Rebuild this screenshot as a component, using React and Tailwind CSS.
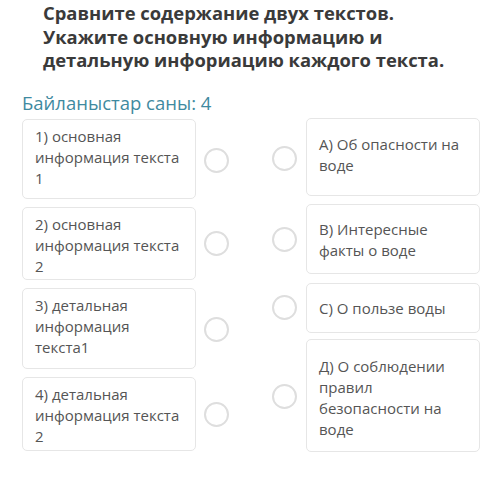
import React from 'react';

const leftItems = [
  { lines: ['1) основная', 'информация текста', '1'], h: 'h-[80px]', circle: 'mt-[29px]' },
  { lines: ['2) основная', 'информация текста', '2'], h: 'h-[73px]', circle: 'mt-[24px]' },
  { lines: ['3) детальная', 'информация', 'текста1'], h: 'h-[81px]', circle: 'mt-[29px]' },
  { lines: ['4) детальная', 'информация текста', '2'], h: 'h-[74px]', circle: 'mt-[25px]' },
];

const rightItems = [
  { lines: ['А) Об опасности на', 'воде'], h: 'h-[78px]', pt: 'pt-[15px]', circle: 'mt-[28px]', mt: 'mt-0' },
  { lines: ['В) Интересные', 'факты о воде'], h: 'h-[70px]', pt: 'pt-[14px]', circle: 'mt-[23px]', mt: 'mt-[8px]' },
  { lines: ['С) О пользе воды'], h: 'h-[50px]', pt: 'pt-[14px]', circle: 'mt-[12px]', mt: 'mt-[9px]' },
  { lines: ['Д) О соблюдении', 'правил', 'безопасности на', 'воде'], h: 'h-[113px]', pt: 'pt-[16px]', circle: 'mt-[45px]', mt: 'mt-[6px]' },
];

function Circle({ className }) {
  return <div className={`w-[25px] h-[25px] rounded-full border-2 border-[#dedede] bg-white shrink-0 ${className}`} />;
}

function Lines({ lines }) {
  return lines.map((l, i) => (
    <React.Fragment key={i}>
      {l}
      {i < lines.length - 1 && <br />}
    </React.Fragment>
  ));
}

export default function App() {
  return (
    <div className="w-[500px] h-[500px] bg-white overflow-hidden" style={{ fontFamily: '"Open Sans", sans-serif' }}>
      <h1 className="pl-[43px] pt-[1px] text-[18.4px] leading-[23.5px] font-bold text-[#3a3a3a]">
        Сравните содержание двух текстов.
        <br />
        Укажите основную информацию и
        <br />
        детальную инфориацию каждого текста.
      </h1>
      <div className="pl-[22px] mt-[19px] text-[18.5px] leading-[23px] text-[#3f8aa0]">Байланыстар саны: 4</div>

      <div className="flex mt-[5px]">
        <div className="flex flex-col gap-[8px] pl-[22px]">
          {leftItems.map((item, i) => (
            <div key={i} className="flex items-start">
              <div className={`w-[174px] ${item.h} border border-[#e6e6e6] rounded-[5px] pl-[12px] pt-[6px] text-[15px] leading-[21px] text-[#555]`}>
                <Lines lines={item.lines} />
              </div>
              <Circle className={`ml-[8px] ${item.circle}`} />
            </div>
          ))}
        </div>

        <div className="flex flex-col ml-[43px] -mt-[1px]">
          {rightItems.map((item, i) => (
            <div key={i} className={`flex items-start ${item.mt}`}>
              <Circle className={item.circle} />
              <div className={`ml-[9px] w-[174px] ${item.h} ${item.pt} border border-[#e6e6e6] rounded-[5px] pl-[12px] text-[15px] leading-[21px] text-[#555]`}>
                <Lines lines={item.lines} />
              </div>
            </div>
          ))}
        </div>
      </div>
    </div>
  );
}
